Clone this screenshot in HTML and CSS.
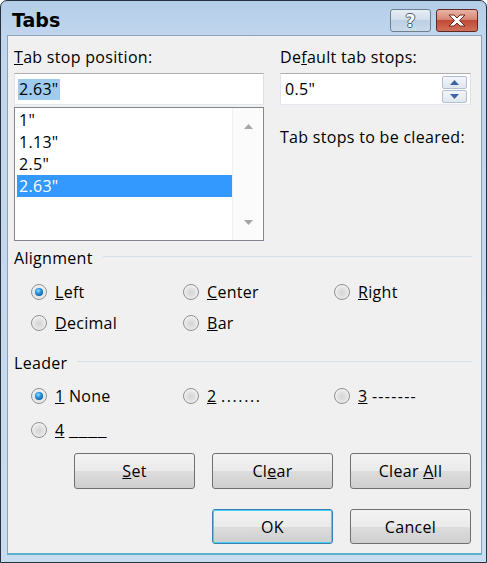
FILE: index.html
```html
<!DOCTYPE html>
<html>
<head>
<meta charset="utf-8">
<link rel="stylesheet" href="styles.css">
</head>
<body>
<div class="window">
  <div class="titlebar">
    <span class="title">Tabs</span>
    <div class="caption-buttons">
      <span class="cbtn help">?</span>
      <span class="cbtn close">
        <svg width="20" height="13" viewBox="0 0 20 13"><path d="M2 1 L7 1 L10 4 L13 1 L18 1 L12.5 6.5 L18 12 L13 12 L10 9 L7 12 L2 12 L7.5 6.5 Z" fill="#fff" stroke="#6b2a22" stroke-width="1" stroke-linejoin="round"/></svg>
      </span>
    </div>
  </div>
  <div class="client">
    <div class="top">
      <div class="col">
        <div class="lbl"><u>T</u>ab stop position:</div>
        <div class="textbox"><span class="hilite">2.63"</span></div>
        <div class="listbox">
          <ul class="items">
            <li>1"</li>
            <li>1.13"</li>
            <li>2.5"</li>
            <li class="selected">2.63"</li>
          </ul>
          <div class="scrollbar">
            <svg width="9" height="5" viewBox="0 0 9 5"><path d="M0 5 L4.5 0 L9 5 Z" fill="#a6a6a6"/></svg>
            <svg width="9" height="5" viewBox="0 0 9 5"><path d="M0 0 L4.5 5 L9 0 Z" fill="#a6a6a6"/></svg>
          </div>
        </div>
      </div>
      <div class="col">
        <div class="lbl">De<u>f</u>ault tab stops:</div>
        <div class="textbox spinbox">
          <span class="val">0.5"</span>
          <div class="spinner">
            <span class="spin-btn"><svg width="9" height="5" viewBox="0 0 9 5"><path d="M0 5 L4.5 0 L9 5 Z" fill="#3d62a8"/></svg></span>
            <span class="spin-btn"><svg width="9" height="5" viewBox="0 0 9 5"><path d="M0 0 L4.5 5 L9 0 Z" fill="#3d62a8"/></svg></span>
          </div>
        </div>
        <div class="lbl clear-lbl">Tab stops to be cleared:</div>
      </div>
    </div>

    <div class="group-head"><span>Alignment</span><span class="rule"></span></div>
    <div class="radios align-rows">
      <div class="opt"><span class="radio checked"></span><span><u>L</u>eft</span></div>
      <div class="opt"><span class="radio"></span><span><u>C</u>enter</span></div>
      <div class="opt"><span class="radio"></span><span><u>R</u>ight</span></div>
      <div class="opt"><span class="radio"></span><span><u>D</u>ecimal</span></div>
      <div class="opt"><span class="radio"></span><span><u>B</u>ar</span></div>
    </div>

    <div class="group-head leader-head"><span>Leader</span><span class="rule"></span></div>
    <div class="radios leader-rows">
      <div class="opt"><span class="radio checked"></span><span><u>1</u> None</span></div>
      <div class="opt"><span class="radio"></span><span><u>2</u> <span class="dots">.......</span></span></div>
      <div class="opt"><span class="radio"></span><span><u>3</u> <span class="dashes">-------</span></span></div>
      <div class="opt"><span class="radio"></span><span><u>4</u> <span class="unders">____</span></span></div>
    </div>

    <div class="btn-row first">
      <button class="btn"><u>S</u>et</button>
      <button class="btn">Cl<u>e</u>ar</button>
      <button class="btn">Clear <u>A</u>ll</button>
    </div>
    <div class="btn-row second">
      <button class="btn default">OK</button>
      <button class="btn">Cancel</button>
    </div>
  </div>
</div>
</body>
</html>
```

FILE: styles.css
```css
* { box-sizing: border-box; }
html, body { margin: 0; padding: 0; background: #ffffff; }
body { width: 487px; height: 563px; overflow: hidden; }

.window {
  width: 487px;
  height: 563px;
  display: flex;
  flex-direction: column;
  border: 1px solid #26313d;
  border-radius: 7px 7px 0 0;
  background: linear-gradient(to bottom, #b4cde8 0px, #c0d6ee 34px, #c9ddf0 100%);
  padding: 0 4px 7px 6px;
  font-family: "Open Sans", "Noto Sans", sans-serif;
  font-size: 16px;
  letter-spacing: 0.3px;
  color: #000;
}

.titlebar {
  height: 34px;
  flex: none;
  display: flex;
  align-items: flex-start;
  justify-content: space-between;
}
.title {
  font-family: "DejaVu Sans", sans-serif;
  font-weight: bold;
  font-size: 19px;
  margin: 8px 0 0 5px;
  color: #000;
  letter-spacing: 0;
}
.caption-buttons {
  display: flex;
  gap: 5px;
  margin: 8px 4px 0 0;
}
.cbtn {
  height: 23px;
  border-radius: 3px;
  display: flex;
  align-items: center;
  justify-content: center;
}
.help {
  width: 41px;
  border: 1px solid #6f7f92;
  background: linear-gradient(to bottom, #e6edf5 0%, #d3dfec 45%, #bccfe3 50%, #c9daec 100%);
  font-family: "DejaVu Sans", sans-serif;
  font-weight: bold;
  font-size: 17px;
  letter-spacing: 0;
  color: #fff;
  text-shadow: 1px 0 0 #4e5b6b, -1px 0 0 #4e5b6b, 0 1px 0 #4e5b6b, 0 -1px 0 #4e5b6b;
}
.close {
  width: 42px;
  border: 1px solid #5c2a22;
  background: linear-gradient(to bottom, #e9b3a6 0%, #d88876 45%, #c24a36 50%, #d0705a 100%);
}

.client {
  flex: 1;
  background: #f0f0f0;
  border: 1px solid #8fa3b8;
  border-bottom: 2px solid #5fb0cf;
  padding: 11px 9px 0 6px;
  display: flex;
  flex-direction: column;
}

.top {
  display: grid;
  grid-template-columns: 250px 191px;
  column-gap: 16px;
}
.col { display: flex; flex-direction: column; }
.lbl { height: 20px; line-height: 20px; white-space: nowrap; }
.clear-lbl { margin-top: 22px; }

.textbox {
  margin-top: 6px;
  height: 32px;
  background: #fff;
  border: 1px solid #abadb3;
  border-left-color: #e2e3ea;
  border-right-color: #dbdfe6;
  border-bottom-color: #e3e9ef;
  display: flex;
  align-items: center;
  padding-left: 3px;
}
.hilite {
  background: #9fcbef;
  line-height: 21px;
  padding: 0 1px;
}
.spinbox { justify-content: space-between; padding-right: 3px; }
.val { padding-left: 1px; }
.spinner {
  width: 25px;
  height: 27px;
  display: flex;
  flex-direction: column;
  gap: 1px;
}
.spin-btn {
  flex: 1;
  border: 1px solid #b3bfcd;
  border-radius: 2px;
  background: linear-gradient(to bottom, #f3f6f9, #dfe6ee);
  display: flex;
  align-items: center;
  justify-content: center;
}

.listbox {
  margin-top: 2px;
  height: 134px;
  background: #fff;
  border: 1px solid #828790;
  display: flex;
  padding: 1px 0 0 2px;
}
.items {
  list-style: none;
  margin: 0;
  padding: 0;
  flex: 1;
}
.items li {
  height: 22px;
  line-height: 22px;
  padding-left: 2px;
}
.items li.selected { background: #3399ff; color: #fff; }
.scrollbar {
  width: 31px;
  margin-top: -1px;
  border-left: 1px solid #f0f0f0;
  background: #fbfbfb;
  display: flex;
  flex-direction: column;
  justify-content: space-between;
  align-items: center;
  padding: 16px 0 15px;
}

.group-head {
  margin-top: 7px;
  height: 20px;
  display: flex;
  align-items: center;
}
.group-head .rule {
  flex: 1;
  height: 1px;
  background: #d5dfe5;
  margin: -3px 0 0 10px;
}
.leader-head { margin-top: 20px; }

.radios {
  display: grid;
  grid-template-columns: 152px 151px 1fr;
  padding-left: 17px;
}
.align-rows { margin-top: 14px; row-gap: 11px; }
.leader-rows { margin-top: 13px; row-gap: 14px; }
.opt {
  height: 20px;
  display: flex;
  align-items: center;
  gap: 8px;
  white-space: nowrap;
}
.dots { letter-spacing: 1.6px; }
.dashes { letter-spacing: 1.3px; }
.unders {
  display: inline-block;
  transform: scaleX(1.3);
  transform-origin: left center;
}
.radio {
  width: 16px;
  height: 16px;
  border-radius: 50%;
  border: 1px solid #8c8f93;
  background: radial-gradient(circle at 50% 55%, #d4d4d4 0%, #e3e3e3 45%, #f7f7f7 75%, #ffffff 100%);
  position: relative;
  flex: none;
}
.radio.checked::after {
  content: "";
  position: absolute;
  left: 3px;
  top: 3px;
  width: 8px;
  height: 8px;
  border-radius: 50%;
  background: radial-gradient(circle at 40% 35%, #9fe0ff 0%, #2a9be0 35%, #0d5fa8 75%, #0a3f78 100%);
}

.btn-row {
  display: flex;
  justify-content: flex-end;
  gap: 17px;
  padding-right: 1px;
}
.btn-row.first { margin-top: 13px; }
.btn-row.second { margin-top: 20px; }
.btn {
  width: 121px;
  height: 36px;
  border: 1px solid #707070;
  border-radius: 3px;
  background: linear-gradient(to bottom, #f2f2f2 0%, #ebebeb 50%, #dddddd 51%, #cfcfcf 100%);
  font-family: "Open Sans", "Noto Sans", sans-serif;
  font-size: 16px;
  letter-spacing: 0.3px;
  color: #000;
  padding: 0;
}
.btn-row.second .btn { height: 35px; }
.btn.default {
  border-color: #3c7fb1;
  box-shadow: inset 0 0 0 1px #48d0f6;
}
```
